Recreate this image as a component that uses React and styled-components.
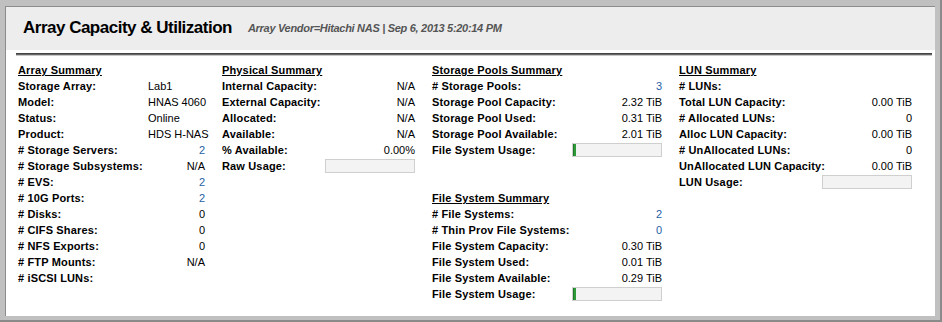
import React from "react";
import styled, { createGlobalStyle } from "styled-components";

const GlobalStyle = createGlobalStyle`
  html, body {
    margin: 0;
    padding: 0;
    background: #8a8a8a;
  }
  body {
    font-family: "Liberation Sans", Arial, sans-serif;
    width: 942px;
    height: 322px;
    overflow: hidden;
  }
`;

const Frame = styled.div`
  box-sizing: border-box;
  width: 940px;
  height: 320px;
  padding: 6px 5px 4px 5px;
  background: #c0c0c0;
  display: flex;
`;

const Panel = styled.div`
  flex: 1;
  display: flex;
  flex-direction: column;
  background: #fff;
  border-top: 1px solid #8c8c8c;
  border-left: 1px solid #8c8c8c;
`;

const Header = styled.div`
  height: 43px;
  background: #ededed;
  display: flex;
  align-items: center;
  padding: 0 0 1px 17px;
  box-sizing: border-box;
`;

const Title = styled.h1`
  margin: 0;
  font-size: 17px;
  font-weight: bold;
  letter-spacing: -0.5px;
  color: #000;
`;

const Subtitle = styled.span`
  margin-left: 16px;
  font-size: 11px;
  font-weight: bold;
  font-style: italic;
  letter-spacing: -0.3px;
  color: #555;
`;

const Rule = styled.div`
  margin: 3px 3px 0 10px;
  height: 1px;
  border-top: 1px solid #444;
  border-bottom: 1px solid #c8c8c8;
  background: #666;
`;

const Columns = styled.div`
  display: flex;
  gap: 17px;
  padding: 6px 0 0 12px;
`;

const Column = styled.div`
  display: flex;
  flex-direction: column;
  gap: 32px;
`;

const Section = styled.div`
  display: grid;
  grid-template-columns: ${(p) => p.$labelW}px ${(p) => p.$valueW}px;
  grid-auto-rows: 16px;
  font-size: 11px;
  line-height: 16px;
`;

const Heading = styled.div`
  grid-column: 1 / -1;
  font-weight: bold;
  text-decoration: underline;
  letter-spacing: 0.15px;
  color: #000;
`;

const Label = styled.div`
  font-weight: bold;
  letter-spacing: 0.15px;
  color: #000;
  white-space: nowrap;
`;

const Value = styled.div`
  white-space: nowrap;
  text-align: ${(p) => (p.$left ? "left" : "right")};
  color: ${(p) => (p.$link ? "#1f5fa8" : "#000")};
`;

const Bar = styled.div`
  box-sizing: border-box;
  margin-top: 1px;
  height: 14px;
  border: 1px solid #cfcfcf;
  background: #f3f3f3;
  display: flex;
`;

const Fill = styled.div`
  height: 100%;
  background: #2f9a3a;
  border-left: 1px solid #1e7a28;
`;

const columns = [
  [
    {
      title: "Array Summary",
      labelW: 130,
      valueW: 57,
      rows: [
        { label: "Storage Array:", value: "Lab1", left: true },
        { label: "Model:", value: "HNAS 4060", left: true },
        { label: "Status:", value: "Online", left: true },
        { label: "Product:", value: "HDS H-NAS", left: true },
        { label: "# Storage Servers:", value: "2", link: true },
        { label: "# Storage Subsystems:", value: "N/A" },
        { label: "# EVS:", value: "2", link: true },
        { label: "# 10G Ports:", value: "2", link: true },
        { label: "# Disks:", value: "0" },
        { label: "# CIFS Shares:", value: "0" },
        { label: "# NFS Exports:", value: "0" },
        { label: "# FTP Mounts:", value: "N/A" },
        { label: "# iSCSI LUNs:", value: "" },
      ],
    },
  ],
  [
    {
      title: "Physical Summary",
      labelW: 103,
      valueW: 90,
      rows: [
        { label: "Internal Capacity:", value: "N/A" },
        { label: "External Capacity:", value: "N/A" },
        { label: "Allocated:", value: "N/A" },
        { label: "Available:", value: "N/A" },
        { label: "% Available:", value: "0.00%" },
        { label: "Raw Usage:", bar: 0 },
      ],
    },
  ],
  [
    {
      title: "Storage Pools Summary",
      labelW: 140,
      valueW: 90,
      rows: [
        { label: "# Storage Pools:", value: "3", link: true },
        { label: "Storage Pool Capacity:", value: "2.32 TiB" },
        { label: "Storage Pool Used:", value: "0.31 TiB" },
        { label: "Storage Pool Available:", value: "2.01 TiB" },
        { label: "File System Usage:", bar: 2 },
      ],
    },
    {
      title: "File System Summary",
      labelW: 140,
      valueW: 90,
      rows: [
        { label: "# File Systems:", value: "2", link: true },
        { label: "# Thin Prov File Systems:", value: "0", link: true },
        { label: "File System Capacity:", value: "0.30 TiB" },
        { label: "File System Used:", value: "0.01 TiB" },
        { label: "File System Available:", value: "0.29 TiB" },
        { label: "File System Usage:", bar: 2 },
      ],
    },
  ],
  [
    {
      title: "LUN Summary",
      labelW: 143,
      valueW: 90,
      rows: [
        { label: "# LUNs:", value: "" },
        { label: "Total LUN Capacity:", value: "0.00 TiB" },
        { label: "# Allocated LUNs:", value: "0" },
        { label: "Alloc LUN Capacity:", value: "0.00 TiB" },
        { label: "# UnAllocated LUNs:", value: "0" },
        { label: "UnAllocated LUN Capacity:", value: "0.00 TiB" },
        { label: "LUN Usage:", bar: 0 },
      ],
    },
  ],
];

export default function App() {
  return (
    <>
      <GlobalStyle />
      <Frame>
        <Panel>
          <Header>
            <Title>Array Capacity &amp; Utilization</Title>
            <Subtitle>Array Vendor=Hitachi NAS | Sep 6, 2013 5:20:14 PM</Subtitle>
          </Header>
          <Rule />
          <Columns>
            {columns.map((col, ci) => (
              <Column key={ci}>
                {col.map((sec) => (
                  <Section key={sec.title} $labelW={sec.labelW} $valueW={sec.valueW}>
                    <Heading>{sec.title}</Heading>
                    {sec.rows.map((r) => (
                      <React.Fragment key={r.label}>
                        <Label>{r.label}</Label>
                        {r.bar !== undefined ? (
                          <Bar>{r.bar > 0 && <Fill style={{ width: r.bar }} />}</Bar>
                        ) : (
                          <Value $left={r.left} $link={r.link}>
                            {r.value}
                          </Value>
                        )}
                      </React.Fragment>
                    ))}
                  </Section>
                ))}
              </Column>
            ))}
          </Columns>
        </Panel>
      </Frame>
    </>
  );
}
